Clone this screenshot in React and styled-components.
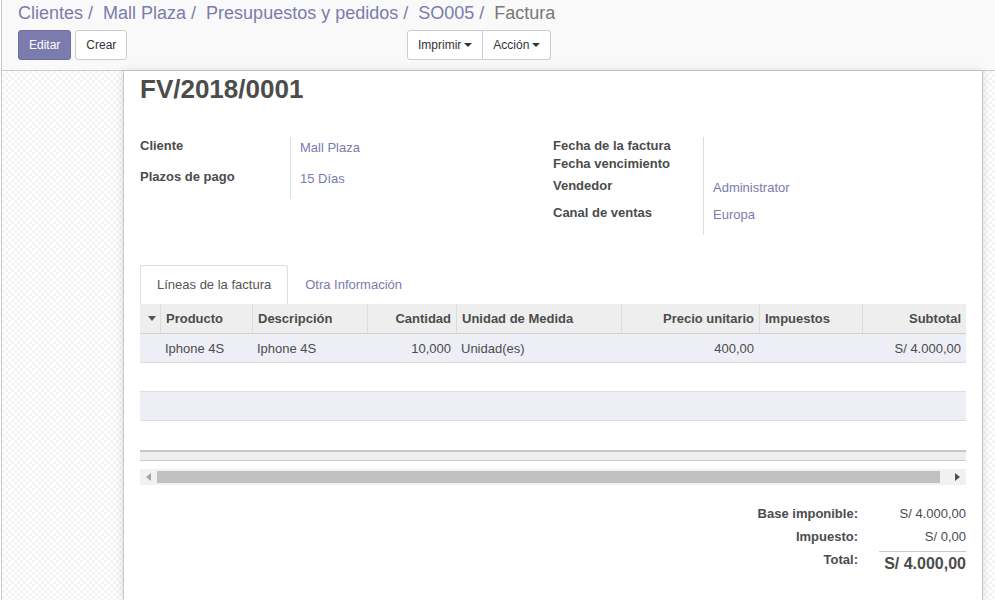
import React from 'react';
import styled, { createGlobalStyle } from 'styled-components';

const Global = createGlobalStyle`
  html, body { margin: 0; padding: 0; background: #ffffff; }
  body {
    font-family: "Liberation Sans", Arial, sans-serif;
    font-size: 13px;
    color: #4c4c4c;
  }
  * { box-sizing: border-box; }
`;

const Root = styled.div`
  position: relative;
  height: 600px;
  margin-left: 1px;
  border-left: 1px solid #c8c8c8;
  display: flex;
  flex-direction: column;
  overflow: hidden;
`;

const ActiveMarker = styled.span`
  position: absolute;
  left: -2px;
  top: 137px;
  width: 2px;
  height: 23px;
  background: #7c7bad;
`;

const ControlPanel = styled.header`
  flex: none;
  height: 71px;
  background: #f9f9f9;
  border-bottom: 1px solid #cccccc;
  padding: 1px 16px 0 16px;
`;

const Breadcrumb = styled.ol`
  display: flex;
  gap: 10px;
  margin: 0;
  padding: 0;
  list-style: none;
  font-size: 18px;
  line-height: 24px;
`;

const Crumb = styled.li`
  color: ${p => (p.$active ? '#777777' : '#7c7bad')};
  white-space: nowrap;
`;

const ButtonsRow = styled.div`
  display: flex;
  align-items: center;
  margin-top: 5px;
`;

const LeftButtons = styled.div`
  display: flex;
  gap: 4px;
  width: 389px;
`;

const Button = styled.button`
  height: 30px;
  padding: 0 10px;
  font-family: inherit;
  font-size: 12px;
  line-height: 18px;
  border: 1px solid ${p => (p.$primary ? '#6f6ea3' : '#cccccc')};
  background: ${p => (p.$primary ? '#7c7bad' : '#ffffff')};
  color: ${p => (p.$primary ? '#ffffff' : '#333333')};
  border-radius: 3px;
  display: inline-flex;
  align-items: center;
  cursor: pointer;
`;

const BtnGroup = styled.div`
  display: flex;
  & > ${Button} { border-radius: 0; }
  & > ${Button}:first-child { border-radius: 3px 0 0 3px; }
  & > ${Button}:last-child { border-radius: 0 3px 3px 0; border-left: none; }
`;

const Caret = styled.span`
  display: inline-block;
  width: 0;
  height: 0;
  margin-left: 3px;
  border-top: 4px solid #333333;
  border-left: 4px solid transparent;
  border-right: 4px solid transparent;
`;

const Workspace = styled.main`
  flex: 1;
  display: flex;
  padding-left: 121px;
  background-color: #ffffff;
  background-image:
    linear-gradient(45deg, #f4f4f4 25%, transparent 25%, transparent 75%, #f4f4f4 75%),
    linear-gradient(45deg, #f4f4f4 25%, transparent 25%, transparent 75%, #f4f4f4 75%);
  background-size: 6px 6px;
  background-position: 0 0, 3px 3px;
`;

const Sheet = styled.section`
  width: 860px;
  flex: none;
  background: #ffffff;
  border-left: 1px solid #c6c6c6;
  border-right: 1px solid #c6c6c6;
  box-shadow: 0 0 9px rgba(0, 0, 0, 0.13);
  padding: 3px 16px 0 16px;
`;

const Title = styled.h1`
  margin: 0;
  font-size: 26px;
  line-height: 30px;
  font-weight: bold;
  color: #4c4c4c;
`;

const Groups = styled.div`
  display: grid;
  grid-template-columns: 413px 413px;
  align-items: start;
  margin-top: 33px;
`;

const Group = styled.div`
  display: grid;
  grid-template-columns: 150px 1fr;
  grid-template-rows: ${p => p.$rows};
`;

const Label = styled.div`
  font-weight: bold;
  line-height: 18px;
  color: #4c4c4c;
`;

const Value = styled.div`
  border-left: 1px solid #dddddd;
  padding: 2px 0 0 9px;
  line-height: 18px;
  color: #7c7bad;
`;

const TabBar = styled.div`
  display: flex;
  margin-top: 30px;
`;

const Tab = styled.div`
  padding: 10px 16px;
  line-height: 18px;
  border: 1px solid ${p => (p.$active ? '#dddddd' : 'transparent')};
  border-bottom: none;
  border-radius: 3px 3px 0 0;
  background: #ffffff;
  color: ${p => (p.$active ? '#555555' : '#7c7bad')};
  white-space: nowrap;
`;

const COLS = '20px 92px 115px 89px 165px 138px 103px 104px';

const HeaderRow = styled.div`
  display: grid;
  grid-template-columns: ${COLS};
  height: 30px;
  background: #eeeeee;
  border-bottom: 1px solid #d2d2d2;
`;

const HeadCell = styled.div`
  display: flex;
  align-items: center;
  justify-content: ${p => (p.$right ? 'flex-end' : 'flex-start')};
  padding: 0 5px;
  font-weight: bold;
  border-left: ${p => (p.$first ? 'none' : '1px solid #dcdcdc')};
  white-space: nowrap;
`;

const SortArrow = styled.span`
  width: 0;
  height: 0;
  margin-left: 3px;
  border-top: 5px solid #555555;
  border-left: 4px solid transparent;
  border-right: 4px solid transparent;
`;

const Row = styled.div`
  display: grid;
  grid-template-columns: ${COLS};
  height: 29px;
  background: ${p => (p.$striped ? '#eeeef6' : '#ffffff')};
  border-bottom: ${p => (p.$last ? 'none' : '1px solid #dddddd')};
`;

const Cell = styled.div`
  display: flex;
  align-items: center;
  justify-content: ${p => (p.$right ? 'flex-end' : 'flex-start')};
  padding: 0 5px;
  white-space: nowrap;
`;

const ListFooter = styled.div`
  height: 11px;
  background: #eeeeee;
  border-top: 2px solid #c8c8c8;
  border-bottom: 1px solid #cccccc;
`;

const ScrollTrack = styled.div`
  margin-top: 8px;
  height: 16px;
  background: #f1f1f1;
  display: flex;
  align-items: center;
`;

const ScrollArrow = styled.div`
  flex: none;
  width: 17px;
  height: 16px;
  display: flex;
  align-items: center;
  justify-content: center;
`;

const Thumb = styled.div`
  flex: 1;
  height: 12px;
  background: #c1c1c1;
  margin-right: 9px;
`;

const Totals = styled.div`
  margin-top: 20px;
  display: grid;
  grid-template-columns: auto 87px;
  column-gap: 21px;
  justify-content: end;
`;

const TotalLabel = styled.div`
  font-weight: bold;
  text-align: right;
  line-height: 18px;
  height: ${p => p.$h || 'auto'};
`;

const TotalValue = styled.div`
  text-align: right;
  line-height: 18px;
  white-space: nowrap;
  height: ${p => p.$h || 'auto'};
`;

const GrandTotal = styled.div`
  text-align: right;
  border-top: 1px solid #cccccc;
  padding-top: 2px;
  font-size: 16px;
  line-height: 20px;
  font-weight: bold;
  white-space: nowrap;
`;

const columns = [
  { key: 'sort', label: '', first: true },
  { key: 'prod', label: 'Producto' },
  { key: 'desc', label: 'Descripción' },
  { key: 'qty', label: 'Cantidad', right: true },
  { key: 'uom', label: 'Unidad de Medida' },
  { key: 'price', label: 'Precio unitario', right: true },
  { key: 'tax', label: 'Impuestos' },
  { key: 'sub', label: 'Subtotal', right: true },
];

const lines = [
  { sort: '', prod: 'Iphone 4S', desc: 'Iphone 4S', qty: '10,000', uom: 'Unidad(es)', price: '400,00', tax: '', sub: 'S/ 4.000,00' },
  null,
  null,
  null,
];

export default function App() {
  return (
    <>
      <Global />
      <Root>
        <ActiveMarker />
        <ControlPanel>
          <Breadcrumb>
            <Crumb>Clientes /</Crumb>
            <Crumb>Mall Plaza /</Crumb>
            <Crumb>Presupuestos y pedidos /</Crumb>
            <Crumb>SO005 /</Crumb>
            <Crumb $active>Factura</Crumb>
          </Breadcrumb>
          <ButtonsRow>
            <LeftButtons>
              <Button $primary>Editar</Button>
              <Button>Crear</Button>
            </LeftButtons>
            <BtnGroup>
              <Button>Imprimir<Caret /></Button>
              <Button>Acción<Caret /></Button>
            </BtnGroup>
          </ButtonsRow>
        </ControlPanel>
        <Workspace>
          <Sheet>
            <Title>FV/2018/0001</Title>
            <Groups>
              <Group $rows="31px 31px">
                <Label>Cliente</Label>
                <Value>Mall Plaza</Value>
                <Label>Plazos de pago</Label>
                <Value>15 Días</Value>
              </Group>
              <Group $rows="18px 22px 27px 31px">
                <Label>Fecha de la factura</Label>
                <Value />
                <Label>Fecha vencimiento</Label>
                <Value />
                <Label>Vendedor</Label>
                <Value>Administrator</Value>
                <Label>Canal de ventas</Label>
                <Value>Europa</Value>
              </Group>
            </Groups>
            <TabBar>
              <Tab $active>Líneas de la factura</Tab>
              <Tab>Otra Información</Tab>
            </TabBar>
            <HeaderRow>
              {columns.map(c => (
                <HeadCell key={c.key} $right={c.right} $first={c.first}>
                  {c.first ? <SortArrow /> : c.label}
                </HeadCell>
              ))}
            </HeaderRow>
            {lines.map((l, i) => (
              <Row key={i} $striped={i % 2 === 0} $last={i === lines.length - 1}>
                {columns.map(c => (
                  <Cell key={c.key} $right={c.right}>{l ? l[c.key] : ''}</Cell>
                ))}
              </Row>
            ))}
            <ListFooter />
            <ScrollTrack>
              <ScrollArrow>
                <svg width="5" height="8" viewBox="0 0 5 8"><path d="M5 0 L0 4 L5 8 Z" fill="#a3a3a3" /></svg>
              </ScrollArrow>
              <Thumb />
              <ScrollArrow>
                <svg width="5" height="8" viewBox="0 0 5 8"><path d="M0 0 L5 4 L0 8 Z" fill="#505050" /></svg>
              </ScrollArrow>
            </ScrollTrack>
            <Totals>
              <TotalLabel $h="23px">Base imponible:</TotalLabel>
              <TotalValue $h="23px">S/ 4.000,00</TotalValue>
              <TotalLabel $h="23px">Impuesto:</TotalLabel>
              <TotalValue $h="23px">S/ 0,00</TotalValue>
              <TotalLabel>Total:</TotalLabel>
              <GrandTotal>S/ 4.000,00</GrandTotal>
            </Totals>
          </Sheet>
        </Workspace>
      </Root>
    </>
  );
}
